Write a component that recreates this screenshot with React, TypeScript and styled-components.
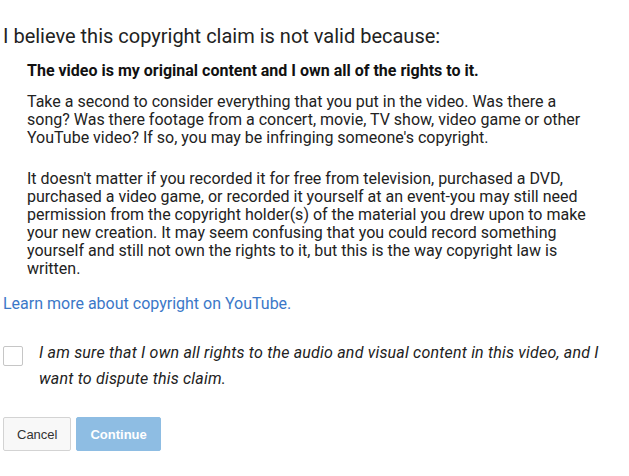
import React from "react";
import styled, { createGlobalStyle } from "styled-components";

const Global = createGlobalStyle`
  body {
    margin: 0;
    background: #fff;
    font-family: Roboto, "Liberation Sans", Arial, sans-serif;
    color: #222;
  }
`;

const Page = styled.div`
  padding: 24px 3px 0 3px;
  width: 623px;
`;

const Heading = styled.h2`
  margin: 0;
  font-size: 20px;
  font-weight: 400;
  line-height: 24px;
  color: #222;
`;

const Reason = styled.div`
  padding: 0 0 0 24px;
  margin-top: 14px;
  width: 568px;
`;

const ReasonTitle = styled.div`
  font-size: 16px;
  font-weight: 700;
  line-height: 18px;
  color: #111;
`;

const Para = styled.p`
  margin: 13px 0 0;
  font-size: 16px;
  line-height: 18px;
  color: #222;
  & + & {
    margin-top: 23px;
  }
`;

const LearnLink = styled.a`
  display: block;
  margin-top: 17px;
  font-size: 16px;
  line-height: 18px;
  color: #3b78c8;
  text-decoration: none;
`;

const Confirm = styled.label`
  display: flex;
  align-items: flex-start;
  gap: 16px;
  margin-top: 27px;
`;

const Box = styled.span`
  flex: none;
  box-sizing: border-box;
  width: 20px;
  height: 20px;
  margin-top: 6px;
  border: 1px solid #c6c6c6;
  border-radius: 2px;
  background: #fff;
`;

const ConfirmText = styled.span`
  font-size: 16px;
  font-style: italic;
  letter-spacing: 0.2px;
  line-height: 26px;
  color: #222;
  width: 570px;
`;

const Buttons = styled.div`
  display: flex;
  gap: 5px;
  margin-top: 25px;
`;

const Button = styled.button<{ primary?: boolean }>`
  height: 34px;
  padding: 0 13px;
  font-family: "Liberation Sans", Arial, sans-serif;
  font-size: 13px;
  font-weight: ${p => (p.primary ? 700 : 400)};
  border-radius: 2px;
  border: 1px solid ${p => (p.primary ? "#8ebde3" : "#d3d3d3")};
  background: ${p => (p.primary ? "#8ebde3" : "#f8f8f8")};
  color: ${p => (p.primary ? "#fff" : "#333")};
  cursor: pointer;
`;

export default function App() {
  return (
    <Page>
      <Global />
      <Heading>I believe this copyright claim is not valid because:</Heading>
      <Reason>
        <ReasonTitle>
          The video is my original content and I own all of the rights to it.
        </ReasonTitle>
        <Para>
          Take a second to consider everything that you put in the video. Was
          there a song? Was there footage from a concert, movie, TV show, video
          game or other YouTube video? If so, you may be infringing someone's
          copyright.
        </Para>
        <Para>
          It doesn't matter if you recorded it for free from television,
          purchased a DVD, purchased a video game, or recorded it yourself at
          an event-you may still need permission from the copyright holder(s)
          of the material you drew upon to make your new creation. It may seem
          confusing that you could record something yourself and still not own
          the rights to it, but this is the way copyright law is written.
        </Para>
      </Reason>
      <LearnLink href="#">Learn more about copyright on YouTube.</LearnLink>
      <Confirm>
        <Box />
        <ConfirmText>
          I am sure that I own all rights to the audio and visual content in
          this video, and I want to dispute this claim.
        </ConfirmText>
      </Confirm>
      <Buttons>
        <Button>Cancel</Button>
        <Button primary disabled>
          Continue
        </Button>
      </Buttons>
    </Page>
  );
}
